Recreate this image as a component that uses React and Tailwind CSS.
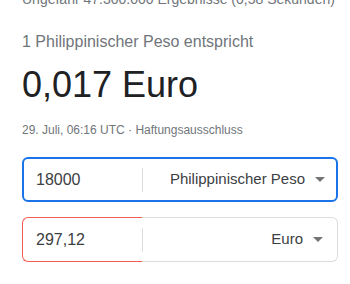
import React from 'react';

const Caret = () => (
    <svg width="10" height="5" viewBox="0 0 10 5" className="shrink-0">
        <polygon points="0,0 10,0 5,5" fill="#757575" />
    </svg>
);

const App = () => {
    return (
        <div className="w-[350px] h-[284px] overflow-hidden bg-white pl-[22px] font-['Liberation_Sans',Arial,sans-serif]">
            {/* Results count, cut off at the top */}
            <div className="mt-[-11px] text-[14px] leading-[20px] text-[#70757a] whitespace-nowrap">
                Ungefähr 47.300.000 Ergebnisse (0,58 Sekunden)
            </div>

            <div className="mt-[21px] text-[16px] leading-[24px] text-[#70757a]">
                1 Philippinischer Peso entspricht
            </div>

            <div className="mt-[9px] text-[36px] leading-[44px] text-[#202124]">
                0,017 Euro
            </div>

            <div className="mt-[15px] text-[12px] leading-[16px] text-[#70757a]">
                29. Juli, 06:16 UTC · Haftungsausschluss
            </div>

            {/* Source currency */}
            <div className="mt-[19px] w-[316px] h-[45px] flex items-center border-2 border-[#1a73e8] rounded-[6px]">
                <div className="w-[118px] pl-[12px] text-[16px] text-[#3c4043]">18000</div>
                <div className="w-px h-[24px] bg-[#dadce0]"></div>
                <div className="flex-1 flex items-center justify-end gap-[10px] pr-[11px] text-[15px] text-[#3c4043]">
                    <span>Philippinischer Peso</span>
                    <Caret />
                </div>
            </div>

            {/* Target currency */}
            <div className="mt-[15px] w-[316px] h-[45px] flex">
                <div className="w-[120px] flex items-center pl-[13px] border-y border-l border-[#f25c54] rounded-l-[6px] text-[16px] text-[#3c4043]">
                    297,12
                </div>
                <div className="flex-1 flex items-center border-y border-r border-[#dadce0] rounded-r-[6px]">
                    <div className="w-px h-[24px] bg-[#dadce0]"></div>
                    <div className="flex-1 flex items-center justify-end gap-[10px] pr-[14px] text-[15px] text-[#3c4043]">
                        <span>Euro</span>
                        <Caret />
                    </div>
                </div>
            </div>
        </div>
    );
};

export default App;
